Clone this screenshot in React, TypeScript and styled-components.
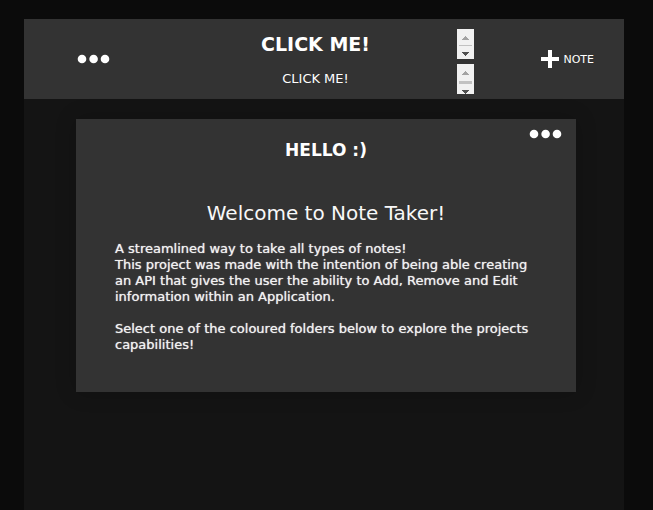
import React, { useState } from 'react';
import styled, { createGlobalStyle } from 'styled-components';

const GlobalStyle = createGlobalStyle`
  * { box-sizing: border-box; }
  body {
    margin: 0;
    background: #0b0b0b;
    color: #fff;
    font-family: Verdana, "DejaVu Sans", sans-serif;
  }
`;

const Page = styled.div`
  display: flex;
  flex-direction: column;
  min-height: 100vh;
  padding: 19px 29px 0 24px;
`;

const Panel = styled.main`
  flex: 1;
  background: #141414;
`;

const Header = styled.header`
  display: grid;
  grid-template-columns: 1fr 2fr 1fr;
  align-items: center;
  background: #333;
`;

const Fields = styled.div`
  display: flex;
  flex-direction: column;
  gap: 5px;
  padding: 10px 0 5px;
`;

const Field = styled.div`
  display: flex;
  height: 30px;
`;

const FieldInput = styled.textarea<{ $heading?: boolean }>`
  flex: 1;
  min-width: 0;
  height: 30px;
  padding: 0;
  border: 0;
  outline: 0;
  resize: none;
  overflow: hidden;
  background: transparent;
  color: #fff;
  text-align: center;
  font-family: inherit;
  font-size: ${(p) => (p.$heading ? 19 : 13)}px;
  font-weight: ${(p) => (p.$heading ? 700 : 400)};
  line-height: 30px;
`;

const IconButton = styled.button<{ $place: 'header' | 'card' | 'add' }>`
  display: flex;
  align-items: center;
  gap: 4px;
  padding: 0;
  border: 0;
  background: none;
  color: #fff;
  font-family: inherit;
  font-size: 11px;
  cursor: pointer;
  justify-self: ${(p) => (p.$place === 'add' ? 'end' : 'start')};
  margin: ${(p) =>
    p.$place === 'header' ? '0 0 0 53px' : p.$place === 'add' ? '0 30px 0 0' : '0 0 0 auto'};
`;

const Card = styled.article`
  margin: 20px 48px 0 52px;
  padding: 10px 13px 39px;
  background: #333;
  box-shadow: 0 0 20px rgba(0, 0, 0, 0.2);
`;

const CardTitle = styled.h2`
  margin: 0 0 40px;
  text-align: center;
  font-size: 17px;
  line-height: 22px;
`;

const CardBody = styled.section`
  padding: 0 26px;
`;

const Welcome = styled.h3`
  margin: 0 0 16px;
  color: #f8f8f8;
  text-align: center;
  font-size: 20px;
  font-weight: 400;
  line-height: 24px;
`;

const Paragraph = styled.p`
  margin: 0 0 16px;
  color: #f2f2f2;
  font-size: 13px;
  line-height: 16px;
  text-shadow: 0 0 1px rgba(255, 255, 255, 0.8);

  &:last-child { margin-bottom: 0; }
`;

const Dots = () => (
  <svg width="34" height="10" viewBox="0 0 34 10" fill="#fff" aria-hidden="true">
    <circle cx="5" cy="5" r="4.3" />
    <circle cx="16.6" cy="5" r="4.3" />
    <circle cx="28" cy="5" r="4.3" />
  </svg>
);

const Plus = () => (
  <svg width="18" height="18" viewBox="0 0 18 18" fill="#fff" aria-hidden="true">
    <path d="M7 0h4v7h7v4h-7v7H7v-7H0V7h7z" />
  </svg>
);

const ScrollTrack = ({ overflowing }: { overflowing?: boolean }) => (
  <svg width="17" height="30" viewBox="0 0 17 30" shapeRendering="crispEdges" aria-hidden="true">
    <path d="M0 0h17v30H0z" fill="#f1f1f1" />
    <path d="M5 10h7v1H5zM6 9h5v1H6zM7 8h3v1H7zM8 7h1v1H8z" fill="#a3a3a3" />
    <path d={overflowing ? 'M2 17h13v3H2z' : 'M2 16h13v1H2z'} fill="#c1c1c1" />
    <path
      d={
        overflowing
          ? 'M5 26h7v1H5zM6 27h5v1H6zM7 28h3v1H7zM8 29h1v1H8z'
          : 'M5 23h7v1H5zM6 24h5v1H6zM7 25h3v1H7zM8 26h1v1H8z'
      }
      fill="#505050"
    />
  </svg>
);

export default function App() {
  const [title, setTitle] = useState('CLICK ME!');
  const [note, setNote] = useState('CLICK ME!');

  return (
    <>
      <GlobalStyle />
      <Page>
        <Panel>
          <Header>
            <IconButton $place="header" type="button" aria-label="Menu">
              <Dots />
            </IconButton>
            <Fields>
              <Field>
                <FieldInput
                  $heading
                  rows={1}
                  aria-label="Note title"
                  value={title}
                  onChange={(e) => setTitle(e.target.value)}
                />
                <ScrollTrack />
              </Field>
              <Field>
                <FieldInput
                  rows={1}
                  aria-label="Note text"
                  value={note}
                  onChange={(e) => setNote(e.target.value)}
                />
                <ScrollTrack overflowing />
              </Field>
            </Fields>
            <IconButton $place="add" type="button">
              <Plus />
              NOTE
            </IconButton>
          </Header>
          <Card>
            <IconButton $place="card" type="button" aria-label="Note options">
              <Dots />
            </IconButton>
            <CardTitle>HELLO :)</CardTitle>
            <CardBody>
              <Welcome>Welcome to Note Taker!</Welcome>
              <Paragraph>
                A streamlined way to take all types of notes!
                <br />
                This project was made with the intention of being able creating an API that gives
                the user the ability to Add, Remove and Edit information within an Application.
              </Paragraph>
              <Paragraph>
                Select one of the coloured folders below to explore the projects capabilities!
              </Paragraph>
            </CardBody>
          </Card>
        </Panel>
      </Page>
    </>
  );
}
